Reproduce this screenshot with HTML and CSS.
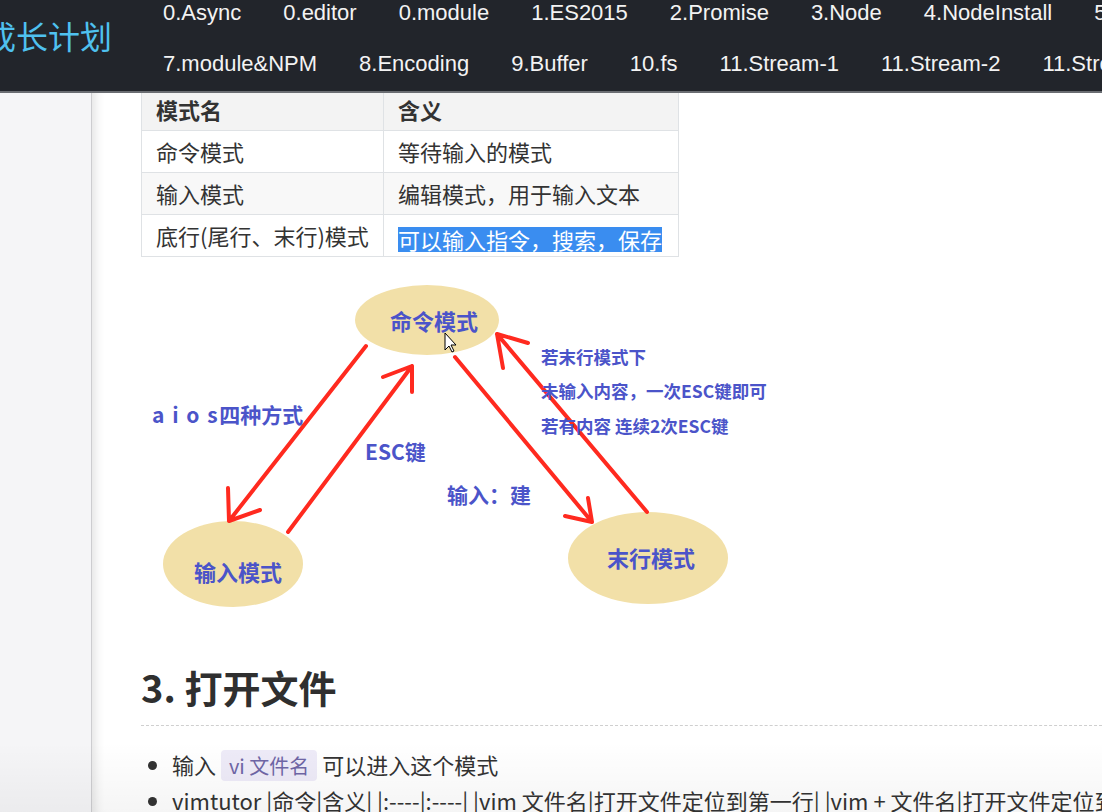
FILE: index.html
```html
<!DOCTYPE html>
<html lang="zh-CN">
<head>
<meta charset="utf-8">
<title>Vim 模式</title>
<link rel="stylesheet" href="styles.css">
</head>
<body>
<header class="topbar">
  <div class="logo">成长计划</div>
  <nav class="nav">
    <div class="nav-row">
      <a>0.Async</a><a>0.editor</a><a>0.module</a><a>1.ES2015</a><a>2.Promise</a><a>3.Node</a><a>4.NodeInstall</a><a>5.NPM</a><a>6.Global</a>
    </div>
    <div class="nav-row">
      <a>7.module&amp;NPM</a><a>8.Encoding</a><a>9.Buffer</a><a>10.fs</a><a>11.Stream-1</a><a>11.Stream-2</a><a>11.Stream-3</a>
    </div>
  </nav>
</header>
<div class="main">
  <aside class="sidebar"></aside>
  <section class="content">
    <table class="modes">
      <thead>
        <tr><th class="col1">模式名</th><th class="col2">含义</th></tr>
      </thead>
      <tbody>
        <tr><td>命令模式</td><td>等待输入的模式</td></tr>
        <tr class="alt"><td>输入模式</td><td>编辑模式，用于输入文本</td></tr>
        <tr><td>底行(尾行、末行)模式</td><td><span class="sel">可以输入指令，搜索，保存</span></td></tr>
      </tbody>
    </table>

    <svg class="diagram" viewBox="0 0 660 345" xmlns="http://www.w3.org/2000/svg">
      <g class="ell">
        <ellipse cx="286" cy="50" rx="72" ry="35"/>
        <ellipse cx="92" cy="294" rx="70" ry="43"/>
        <ellipse cx="507" cy="288" rx="80" ry="46"/>
      </g>
      <g class="arrows">
        <path d="M225 76 L88 251 M87 218 L88 251 L119 240"/>
        <path d="M147 262 L271 96 M242 107 L271 96 L271 122"/>
        <path d="M314 87 L451 252 M424 246 L451 252 L447 228"/>
        <path d="M506 242 L356 64 M387 73 L356 64 L362 98"/>
      </g>
      <g class="lbl">
        <text x="293" y="50" text-anchor="middle" dominant-baseline="central" class="big">命令模式</text>
        <text x="97" y="301" text-anchor="middle" dominant-baseline="central" class="big">输入模式</text>
        <text x="510" y="287" text-anchor="middle" dominant-baseline="central" class="big">末行模式</text>
        <text x="11" y="144" dominant-baseline="central" class="mid"><tspan class="spaced">a i o s</tspan>四种方式</text>
        <text x="224" y="181" dominant-baseline="central" class="mid">ESC键</text>
        <text x="306" y="224" dominant-baseline="central" class="mid">输入：建</text>
        <text x="400" y="86" dominant-baseline="central" class="small">若末行模式下</text>
        <text x="400" y="120" dominant-baseline="central" class="small">未输入内容，一次ESC键即可</text>
        <text x="400" y="155" dominant-baseline="central" class="small">若有内容 连续2次ESC键</text>
      </g>
      <path class="cursor" d="M304 63 L304 80 L308 76 L311 82 L313 81 L310 75 L315 75 Z"/>
    </svg>

    <h2 class="section">3. 打开文件</h2>
    <ul class="bullets">
      <li>输入 <code>vi 文件名</code> 可以进入这个模式</li>
      <li>vimtutor |命令|含义| |:----|:----| |vim 文件名|打开文件定位到第一行| |vim + 文件名|打开文件定位到最后一行|</li>
    </ul>
  </section>
</div>
<div class="fade"></div>
</body>
</html>
```
FILE: styles.css
```css
* { box-sizing: border-box; }
html, body { margin: 0; padding: 0; }
body {
  width: 1102px;
  height: 812px;
  overflow: hidden;
  position: relative;
  background: #fff;
  font-family: "Liberation Sans", "Noto Sans CJK SC", sans-serif;
}

.topbar {
  height: 93px;
  background: #22252b;
  border-bottom: 2px solid #6a6d72;
  display: flex;
  overflow: hidden;
}
.logo {
  flex: none;
  margin: 19px 0 0 -16px;
  font-family: "Noto Sans CJK SC", sans-serif;
  font-size: 32px;
  line-height: 32px;
  color: #4fc1ef;
  white-space: nowrap;
}
.nav {
  flex: none;
  margin-left: 51px;
  padding-top: 2px;
  display: flex;
  flex-direction: column;
  gap: 29px;
}
.nav-row {
  display: flex;
  gap: 42px;
  white-space: nowrap;
  font-family: "Liberation Sans", sans-serif;
  font-size: 22px;
  line-height: 22px;
  color: #f3f3f3;
}

.main {
  display: flex;
  height: 719px;
}
.sidebar {
  flex: none;
  width: 92px;
  background: #f5f5f7;
  border-right: 1px solid #cdcdd0;
}
.content {
  flex: 1;
  min-width: 0;
  overflow: hidden;
  padding-left: 49px;
  box-shadow: inset 12px 0 10px -8px rgba(0, 0, 0, 0.10);
}

.modes {
  border-collapse: collapse;
  margin-top: -5px;
  font-family: "Noto Sans CJK SC", sans-serif;
  font-size: 22px;
  color: #333;
}
.modes th, .modes td {
  border: 1px solid #dfe2e5;
  padding: 0 14px;
  line-height: 41px;
  text-align: left;
  font-weight: normal;
  white-space: nowrap;
}
.modes th { font-weight: bold; background: #f3f3f3; }
.modes tr.alt td { background: #f8f8f8; }
.col1 { width: 242px; }
.col2 { width: 295px; }
.sel {
  display: inline-block;
  line-height: 25px;
  vertical-align: middle;
  background: #3a8df0;
  color: #fff;
}

.diagram {
  display: block;
  margin-top: 13px;
  width: 660px;
  height: 345px;
}
.ell ellipse { fill: #f2e0a8; }
.arrows path {
  fill: none;
  stroke: #ff2a1f;
  stroke-width: 4;
  stroke-linecap: round;
  stroke-linejoin: round;
}
.lbl text {
  font-family: "Noto Sans CJK SC", sans-serif;
  font-weight: bold;
  fill: #4b54c9;
}
.lbl .big { font-size: 22px; }
.lbl .mid { font-size: 21px; }
.lbl .small { font-size: 17.5px; }
.lbl .spaced { letter-spacing: 1.5px; }
.cursor { fill: #fff; stroke: #000; stroke-width: 1; }

.section {
  margin: 49px 0 0;
  padding-bottom: 15px;
  border-bottom: 1px dashed #cfcfcf;
  font-family: "Noto Sans CJK SC", sans-serif;
  font-size: 38px;
  line-height: 46px;
  font-weight: bold;
  color: #2f2f2f;
}
.bullets {
  margin: 21px 0 0;
  padding-left: 31px;
  font-family: "Noto Sans CJK SC", sans-serif;
  font-size: 22px;
  line-height: 35px;
  color: #333;
}
.bullets li { white-space: nowrap; }
.bullets code {
  font-family: "Noto Sans CJK SC", sans-serif;
  font-size: 20px;
  padding: 1px 8px;
  border-radius: 4px;
  background: #eeebf8;
  color: #6f66a6;
}

.fade {
  position: absolute;
  left: 0;
  right: 0;
  bottom: 0;
  height: 70px;
  background: linear-gradient(rgba(0, 0, 0, 0), rgba(0, 0, 0, 0.04));
  pointer-events: none;
}
```
